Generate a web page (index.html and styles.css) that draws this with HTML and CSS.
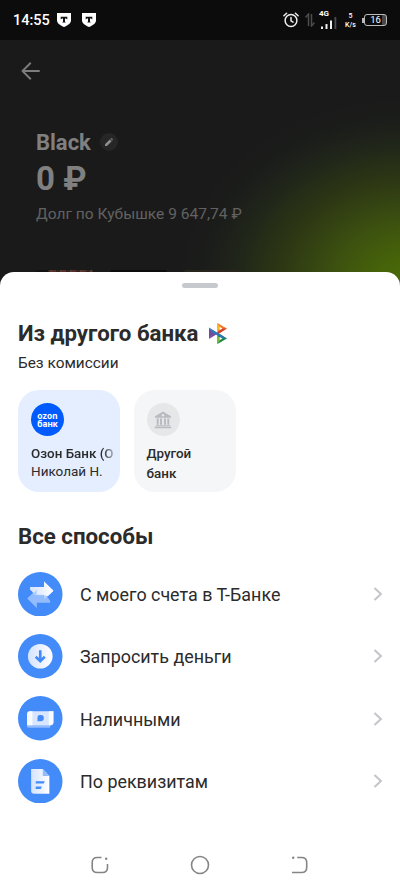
FILE: index.html
```html
<!DOCTYPE html>
<html lang="ru">
<head>
<meta charset="utf-8">
<title>Пополнение</title>
<link rel="stylesheet" href="styles.css">
</head>
<body>
<header class="status">
  <span class="clock">14:55</span>
  <svg class="shield" width="14" height="14" viewBox="0 0 14 14"><path d="M0 0h14v7.5c0 3-3.5 5-7 6.5-3.500-1.500-7-3.500-7-6.500z" fill="#fff"/><path d="M3.700 3.700h6.600v2.700L9 5.500H8v3l.8 1H5.200l.8-1v-3H5l-1.300.9z" fill="#111"/></svg>
  <svg class="shield" width="14" height="14" viewBox="0 0 14 14"><path d="M0 0h14v7.500c0 3-3.500 5-7 6.500-3.500-1.500-7-3.500-7-6.500z" fill="#fff"/><path d="M3.700 3.700h6.600v2.700L9 5.500H8v3l.8 1H5.200l.8-1v-3H5l-1.300.9z" fill="#111"/></svg>
  <div class="status-right">
    <svg width="16" height="16" viewBox="0 0 16 16" fill="none" stroke="#eee" stroke-width="1.500" stroke-linecap="round"><circle cx="8" cy="8.500" r="5.900"/><path d="M8 5.500v3.300l2 1.300M.9 3.800l2.700-2.500M15.100 3.800l-2.700-2.500"/></svg>
    <svg class="data" width="10" height="14" viewBox="0 0 10 14" fill="none" stroke="#4c4c4c" stroke-width="1.500"><path d="M.5 4.500L3.500 1v12M9.500 9.500L6.500 13V1"/></svg>
    <div class="signal"><span class="net">4G</span>
      <svg width="17" height="12" viewBox="0 0 17 12"><path d="M1 9.500h2V12H1zM5.500 7h2v5h-2zM10 3.500h2V12h-2z" fill="#eee"/><path d="M14.500 0h1.800v12h-1.800z" fill="#4c4c4c"/></svg>
    </div>
    <div class="speed"><span>5</span><span>K/s</span></div>
    <div class="battery"><i class="nub"></i><div class="cell">16</div></div>
  </div>
</header>

<section class="account">
  <svg class="back" width="20" height="18" viewBox="0 0 20 18" fill="none" stroke="#7d7d7d" stroke-width="1.900" stroke-linecap="round" stroke-linejoin="round"><path d="M18 9H1.500M9.300 1.300L1.500 9l7.800 7.700"/></svg>
  <div class="name-row"><h1>Black</h1>
    <span class="edit"><svg width="10" height="10" viewBox="0 0 10 10" fill="#8f8f8f"><path d="M1 7.200l4.700-4.700 1.900 1.900L2.900 9H1z"/><path d="M6.100 2.100l.9-.9c.9-.6 2.500.9 1.800 1.900l-.8.900z" fill="#666"/></svg></span>
  </div>
  <div class="balance">0 ₽</div>
  <div class="debt">Долг по Кубышке 9 647,74 ₽</div>
  <div class="peek"><i class="p1"></i><i class="p2"></i><i class="p3"></i></div>
</section>

<main class="sheet">
  <i class="handle"></i>
  <div class="title-row"><h2>Из другого банка</h2>
    <svg class="sbp" width="18" height="21" viewBox="0 0 18 21"><path d="M0 4.500l4.500 5.800L0 16z" fill="#754a9b"/><path d="M8.400 0l9.500 5.500-9.500 6z" fill="#f27b2f"/><path d="M8.400 0l3.800 5.600-3.800 2z" fill="#fab718"/><path d="M8.400 9.500l9.500 6-9.500 5.500z" fill="#168b43"/><path d="M8.400 13l4 2.500-4 5.500z" fill="#7fb83e"/><path d="M17.900 5.500h-4l-5.500 3.400v2.600z" fill="#d0422f"/><path d="M0 16l8.400-5.200-3.400-2z" fill="#754a9b"/><path d="M0 4.500l17.900 11h-4L3.500 9.800z" fill="#2b77b8"/><path d="M10.700 4v3l2.700-1.500zM10.700 14v3l2.700-1.500z" fill="#fff"/></svg>
  </div>
  <p class="sub">Без комиссии</p>
  <div class="cards">
    <div class="card ozon">
      <div class="logo"><span>ozon<br>банк</span></div>
      <div class="bank fade">Озон Банк (О</div>
      <div class="person">Николай Н.</div>
    </div>
    <div class="card other">
      <div class="logo"><svg width="18" height="18" viewBox="0 0 18 18" fill="#b8bbc0"><path d="M9 .6l8 4.600v1.500H1V5.200zM2.700 7.500h2v6.300h-2zM6 7.500h2v6.300H6zM10 7.500h2v6.300h-2zM13.300 7.500h2v6.300h-2zM1.700 14.300h14.600v1H1.700zM.7 15.800h16.600v1.400H.7z"/><circle cx="9" cy="4.200" r="1.200" fill="#e6e7e9"/></svg></div>
      <div class="bank">Другой<br>банк</div>
    </div>
  </div>
  <h2 class="all">Все способы</h2>
  <div class="row">
    <svg class="ico" viewBox="0 0 44 44"><defs><linearGradient id="h"><stop stop-color="#d4e3fe"/><stop offset="1" stop-color="#fff"/></linearGradient></defs><circle cx="22" cy="22" r="22" fill="#428bf9"/><path d="M12 14.800h13.700V9.500l9.300 9-9.300 8.800V23H16c-1-3-2-4-4-5.500z" fill="url(#h)"/><path d="M9 26.300l9.600-9.200v5.100h9.100c1.500 4.300 4.300 4.500 4.300 8.100H18.600v5.400z" fill="#a4c7ff" fill-opacity=".82"/><path d="M18.600 17.100v5.100h7.100v1h4.500l4.800-4.700-9.300-9v5.300H12v2.700c2 1 3 2 4 3z" fill="url(#h)"/></svg>
    <span class="label">С моего счета в Т-Банке</span><svg class="chev" viewBox="0 0 10 14"><path d="M1.500 1l6.400 6-6.400 6"/></svg>
  </div>
  <div class="row">
    <svg class="ico" viewBox="0 0 44 44"><circle cx="22" cy="22" r="22" fill="#428bf9"/><circle cx="22" cy="22" r="12.200" fill="url(#h)"/><path d="M22 16v10.500M17.500 22.500l4.500 4.300 4.500-4.300" fill="none" stroke="#428bf9" stroke-width="2.600"/></svg>
    <span class="label">Запросить деньги</span><svg class="chev" viewBox="0 0 10 14"><path d="M1.500 1l6.400 6-6.400 6"/></svg>
  </div>
  <div class="row">
    <svg class="ico" viewBox="0 0 44 44"><circle cx="22" cy="22" r="22" fill="#428bf9"/><path d="M9 26.500h24l-1.500 5H10.500Q9 31.500 9 30z" fill="#91bbfc"/><path d="M12 15h23v11q0 3-3 3H9V18q0-3 3-3z" fill="#d8e6ff"/><path d="M12 15h2.300v14H9V18q0-3 3-3zM30.500 15H35v11q0 3-3 3h-1.500z" fill="#f8fbff"/><path d="M21.500 18.700h1.200a2.800 2.800 0 012.800 2.800v.6a2.800 2.800 0 01-2.800 2.800h-3.400v-4a2.200 2.200 0 012.200-2.200z" fill="#428bf9"/></svg>
    <span class="label">Наличными</span><svg class="chev" viewBox="0 0 10 14"><path d="M1.500 1l6.400 6-6.400 6"/></svg>
  </div>
  <div class="row">
    <svg class="ico" viewBox="0 0 44 44"><circle cx="22" cy="22" r="22" fill="#428bf9"/><path d="M13 10h11.500l6.500 6.800v17.600H16q-3 0-3-3z" fill="url(#h)"/><path d="M24.500 10l6.500 6.800h-6.500z" fill="#94bcfc"/><path d="M17.500 22h9l-1 2.300h-8zM17.500 27.300h6l-1 2.300h-5z" fill="#428bf9"/></svg>
    <span class="label">По реквизитам</span><svg class="chev" viewBox="0 0 10 14"><path d="M1.500 1l6.400 6-6.400 6"/></svg>
  </div>
  <nav class="nav">
    <svg width="18" height="18" viewBox="0 0 18 18"><path d="M10.500 1.500H6.300Q1.200 1.500 1.200 6.500v5q0 5 5 5h5.300q5 0 5-5V8"/><circle cx="15.200" cy="2.700" r="1.200" fill="#858585" stroke="none"/></svg>
    <svg width="20" height="20" viewBox="0 0 20 20"><circle cx="10" cy="10" r="8.500"/></svg>
    <svg width="18" height="18" viewBox="0 0 18 18"><path d="M6.200 1.500h4.300q5.200 0 5.200 5v5q0 5-5.200 5H1"/><circle cx="2.200" cy="1.700" r="1.200" fill="#858585" stroke="none"/></svg>
  </nav>
</main>
</body>
</html>
```

FILE: styles.css
```css
* { box-sizing: border-box; }
body { margin: 0; width: 400px; height: 892px; overflow: hidden; display: flex; flex-direction: column; background: #1a1a1a; font-family: Roboto, sans-serif; color: #2b2b2b; }
h1, h2, p { margin: 0; }
svg { display: block; flex: none; }
.status { height: 40px; flex: none; background: #0c0c0c; color: #fff; display: flex; align-items: center; padding: 0 14px 0 13px; }
.clock { font-size: 14.500px; font-weight: 500; width: 44px; white-space: nowrap; padding-top: 1px; }
.shield { margin-right: 11px; }
.status-right { margin-left: auto; display: flex; align-items: center; }
.data { margin-left: 6px; }
.signal { width: 18px; height: 18px; margin-left: 5px; margin-top: -3px; display: flex; flex-direction: column; }
.net { font-size: 8px; line-height: 7px; font-weight: 700; margin-left: -1px; }
.signal svg { margin-top: 0; }
.speed { display: flex; flex-direction: column; align-items: center; width: 13px; margin-left: 6px; font-size: 7px; line-height: 9px; font-weight: 500; padding-top: 1px; }
.battery { display: flex; align-items: center; margin-left: 5px; }
.nub { width: 2px; height: 5px; background: #bbb; }
.cell { width: 23px; height: 12px; border: 1px solid #bbb; border-radius: 3px; font-size: 9.500px; line-height: 10px; text-align: center; background: linear-gradient(90deg, transparent 17px, #484848 17px); }
.status-right { margin-right: -1px; }
.account { height: 250px; flex: none; padding: 22px 36px 18px; margin-bottom: -18px; display: flex; flex-direction: column; background: radial-gradient(ellipse 232px 186px at 410px 243px, #4a6c09 0%, #466409 14%, #3c5010 34%, #2c3614 57%, #20251a 76%, #1b1d1a 88%, #1a1a1a 100%); }
.back { margin-left: -15px; }
.name-row { display: flex; align-items: center; margin-top: 50px; height: 24px; }
h1 { font-size: 22px; line-height: 24px; font-weight: 700; color: #808080; width: 64px; padding-top: 1px; }
.edit { width: 18px; height: 18px; border-radius: 50%; background: #262626; display: flex; align-items: center; justify-content: center; }
.balance { font-size: 33px; line-height: 38px; margin-top: 6px; font-weight: 700; color: #808080; }
.debt { font-size: 15.550px; line-height: 20px; margin-top: 6px; color: #626262; white-space: nowrap; }
.peek { display: flex; gap: 17px; margin-top: auto; height: 2px; }
.peek i { height: 2px; width: 57px; border-radius: 2px 2px 0 0; }
.p1 { background: linear-gradient(90deg, #121212 12px, transparent 12px), repeating-linear-gradient(90deg, #35231f 0 4px, #4b4130 4px 6px, #5a2c2c 6px 10px); }
.p2 { background: #0c0c0c; }
.p3 { background: #28241e; }
.sheet { flex: 1; position: relative; padding: 11px 18px 0; background: #fff; border-radius: 14px 14px 0 0; display: flex; flex-direction: column; }
.handle { width: 36px; height: 5px; border-radius: 3px; background: #c6cacf; align-self: center; }
.title-row { display: flex; align-items: center; height: 30px; margin-top: 30px; }
h2 { font-size: 22.250px; line-height: 30px; font-weight: 700; white-space: nowrap; }
.title-row h2 { width: 191px; }
.sub { font-size: 15.400px; line-height: 20px; margin-top: 5px; }
.cards { display: flex; gap: 13.500px; margin-top: 17px; }
.card { width: 102px; height: 102px; border-radius: 21px; padding: 13px 5px 0 13px; overflow: hidden; }
.ozon { background: #e4eeff; }
.other { background: #f5f6f8; }
.logo { width: 33px; height: 33px; border-radius: 50%; display: flex; flex-direction: column; align-items: center; justify-content: center; }
.ozon .logo { background: #005bff; color: #fff; font: 700 8.500px/8px Inter, sans-serif; }
.other .logo { background: #e6e7e9; }
.bank { font-size: 13.400px; line-height: 20px; font-weight: 500; margin-top: 8px; white-space: nowrap; }
.fade { margin-top: 9px; line-height: 18px; -webkit-mask-image: linear-gradient(90deg, #000 72px, transparent 87px); mask-image: linear-gradient(90deg, #000 72px, transparent 87px); }
.person { font-size: 13.500px; line-height: 18px; margin-top: -1px; }
.all { margin-top: 30px; margin-bottom: 11px; line-height: 29px; padding-bottom: 1px; }
.row { display: flex; align-items: center; height: 62.300px; flex: none; }
.ico { width: 44.500px; height: 44.500px; }
.label { font-size: 17.900px; margin-left: 17.500px; white-space: nowrap; padding-top: 1px; }
.chev { width: 10px; height: 14px; margin: 0 -1px 0 auto; fill: none; stroke: #c3c5ca; stroke-width: 2; }
.nav { display: flex; justify-content: space-between; align-items: center; margin: auto 73px 17px 73px; height: 20px; }
.nav svg { fill: none; stroke: #858585; stroke-width: 1.600; }
```
